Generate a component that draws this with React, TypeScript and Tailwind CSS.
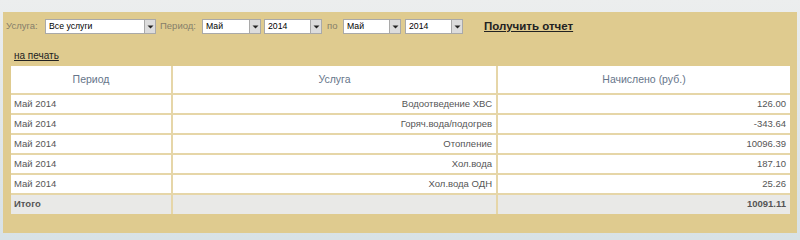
import React from "react";

function Select({ value, width }: { value: string; width: string }) {
  return (
    <div className={`relative h-[15px] ${width} bg-white border border-[#a9a9a9] flex items-center`}>
      <span className="pl-[3px] text-[8.7px] leading-none text-black">{value}</span>
      <div className="absolute right-0 top-0 h-[13px] w-[11px] bg-[#dcdcdc] border-l border-[#a9a9a9] flex items-center justify-center">
        <svg width="7" height="4" viewBox="0 0 7 4">
          <path d="M0.5 0.5 L6.5 0.5 L3.5 3.5 Z" fill="#222" />
        </svg>
      </div>
    </div>
  );
}

const rows = [
  ["Май 2014", "Водоотведение ХВС", "126.00"],
  ["Май 2014", "Горяч.вода/подогрев", "-343.64"],
  ["Май 2014", "Отопление", "10096.39"],
  ["Май 2014", "Хол.вода", "187.10"],
  ["Май 2014", "Хол.вода ОДН", "25.26"],
];

export default function App() {
  return (
    <div
      className="w-[800px] h-[240px] bg-gradient-to-b from-[#eceeee] to-[#d8e2e6] pt-[12px] pl-[3px] overflow-hidden"
      style={{ fontFamily: '"Liberation Sans", Arial, sans-serif' }}
    >
      <div className="w-[794px] h-[221px] bg-[#dfcb8f] pt-[7px] px-[8px]">
        <div className="flex items-center h-[15px] text-[9.5px] text-[#857e6a] -ml-[5px]">
          <span className="w-[39px]">Услуга:</span>
          <Select value="Все услуги" width="w-[111px]" />
          <span className="ml-[4px] w-[42px]">Период:</span>
          <Select value="Май" width="w-[59px]" />
          <div className="ml-[3px]"><Select value="2014" width="w-[58px]" /></div>
          <span className="ml-[5px] w-[16px]">по</span>
          <Select value="Май" width="w-[58px]" />
          <div className="ml-[4px]"><Select value="2014" width="w-[58px]" /></div>
          <span className="ml-[21px] font-bold underline text-[#222] text-[11.5px]">Получить отчет</span>
        </div>
        <div className="mt-[17px] pl-[3px] text-[10px] text-[#222] underline leading-none">на печать</div>
        <table
          className="mt-[5px] w-[779px] bg-white border-collapse text-[9.5px] text-[#555]"
          style={{ tableLayout: "fixed" }}
        >
          <colgroup>
            <col style={{ width: 161 }} />
            <col style={{ width: 325 }} />
            <col style={{ width: 293 }} />
          </colgroup>
          <thead>
            <tr className="h-[28px]">
              <th className="font-normal text-[10.5px] text-[#66758a] border-2 border-[#e6d6a8] border-t-0 border-l-0">Период</th>
              <th className="font-normal text-[10.5px] text-[#66758a] border-2 border-[#e6d6a8] border-t-0">Услуга</th>
              <th className="font-normal text-[10.5px] text-[#66758a] border-2 border-[#e6d6a8] border-t-0 border-r-0">Начислено (руб.)</th>
            </tr>
          </thead>
          <tbody>
            {rows.map((r, i) => (
              <tr key={i} className="h-[20px]">
                <td className="px-[3px] border-2 border-[#e6d6a8] border-l-0">{r[0]}</td>
                <td className="px-[4px] text-right border-2 border-[#e6d6a8]">{r[1]}</td>
                <td className="px-[4px] text-right border-2 border-[#e6d6a8] border-r-0">{r[2]}</td>
              </tr>
            ))}
            <tr className="h-[20px] bg-[#e9e9e7] font-bold">
              <td className="px-[3px] border-2 border-[#e6d6a8] border-l-0 border-b-0">Итого</td>
              <td className="px-[4px] border-2 border-[#e6d6a8] border-b-0"></td>
              <td className="px-[4px] text-right border-2 border-[#e6d6a8] border-r-0 border-b-0">10091.11</td>
            </tr>
          </tbody>
        </table>
      </div>
    </div>
  );
}
